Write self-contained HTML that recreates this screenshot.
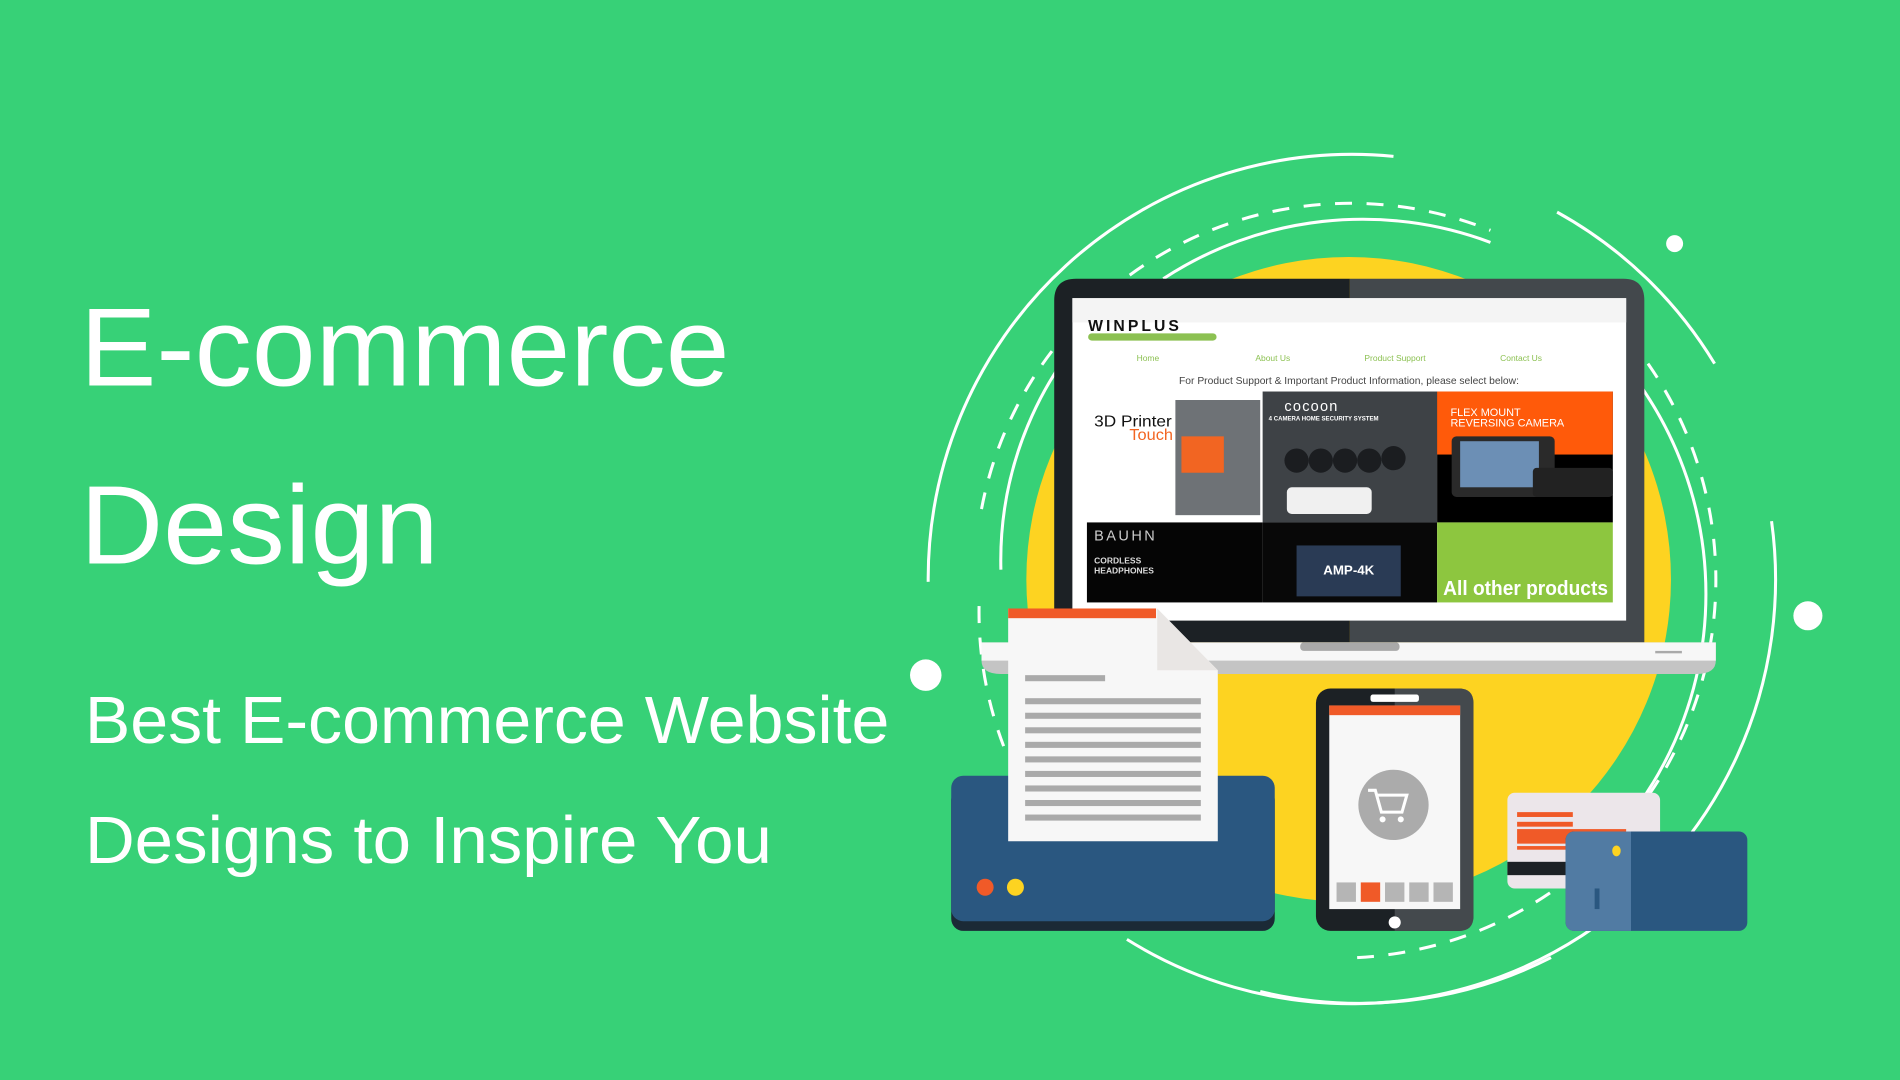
<!DOCTYPE html>
<html><head><meta charset="utf-8"><style>
html,body{margin:0;padding:0;background:#37d177;overflow:hidden}
svg{display:block}
</style></head><body>
<svg width="1900" height="1080" viewBox="0 0 1568 891" preserveAspectRatio="none" xmlns="http://www.w3.org/2000/svg" font-family="Liberation Sans, sans-serif">
<rect width="1568" height="891" fill="#37d177"/>
<g fill="#fff">
<text x="66" y="318" font-size="92" textLength="536" lengthAdjust="spacingAndGlyphs">E-commerce</text>
<text x="66" y="465" font-size="92" textLength="296" lengthAdjust="spacingAndGlyphs">Design</text>
<text x="70" y="613" font-size="55" textLength="664" lengthAdjust="spacingAndGlyphs">Best E-commerce Website</text>
<text x="70" y="712" font-size="55" textLength="567" lengthAdjust="spacingAndGlyphs">Designs to Inspire You</text>
</g>
<circle cx="1113" cy="478" r="266" fill="#fdd321"/>
<g fill="none" stroke="#fff" stroke-width="2.5">
<path d="M 766 480 A 350 350 0 0 1 1150 129"/>
<path d="M 1285 175 A 350 350 0 0 1 1415 300"/>
<path d="M 1462 430 A 350 350 0 0 1 930 775"/>
<path d="M 1040 818 A 350 350 0 0 0 1280 790"/>
<path d="M 960 230 A 300 300 0 0 1 1230 200"/>
<path d="M 1340 300 A 300 300 0 0 1 1340 680"/>
<path d="M 826 470 A 290 290 0 0 1 930 240"/>
<path stroke-dasharray="14 12" d="M 810 420 A 310 310 0 0 1 1230 190"/>
<path stroke-dasharray="14 12" d="M 1360 300 A 312 312 0 0 1 1120 790"/>
<path stroke-dasharray="14 12" d="M 808 500 A 310 310 0 0 0 830 620"/>
</g>
<circle cx="764" cy="557" r="13" fill="#fff"/>
<circle cx="1492" cy="508" r="12" fill="#fff"/>
<circle cx="1382" cy="201" r="7" fill="#fff"/>
<path d="M870 530 V248 Q870 230 888 230 H1114 V530 Z" fill="#1c2125"/>
<path d="M1114 230 H1340 Q1357 230 1357 248 V530 H1114 Z" fill="#43484c"/>
<rect x="885" y="246" width="457" height="266" fill="#fff"/>
<rect x="885" y="246" width="457" height="20" fill="#f4f4f4"/>
<text x="898" y="273" font-size="13" font-weight="bold" letter-spacing="2.5" fill="#111">WINPLUS</text>
<rect x="898" y="275" width="106" height="6" rx="3" fill="#8cc152"/>
<g font-size="7" fill="#8cc152"><text x="938" y="298">Home</text><text x="1036" y="298">About Us</text><text x="1126" y="298">Product Support</text><text x="1238" y="298">Contact Us</text></g>
<text x="973" y="317" font-size="8.5" fill="#444">For Product Support &amp; Important Product Information, please select below:</text>
<rect x="897" y="323" width="145" height="108" fill="#fff"/>
<rect x="970" y="330" width="70" height="95" fill="#6e7276"/>
<rect x="975" y="360" width="35" height="30" fill="#f26522"/>
<text x="903" y="352" font-size="13" fill="#111" textLength="64" lengthAdjust="spacingAndGlyphs">3D Printer</text>
<text x="932" y="363" font-size="13" fill="#f26522" textLength="36" lengthAdjust="spacingAndGlyphs">Touch</text>
<rect x="1042" y="323" width="144" height="108" fill="#3e4246"/>
<text x="1060" y="339" font-size="12" fill="#fff" letter-spacing="1">cocoon</text>
<text x="1047" y="347" font-size="5" fill="#fff" font-weight="bold">4 CAMERA HOME SECURITY SYSTEM</text>
<g fill="#1b1d20"><circle cx="1070" cy="380" r="10"/><circle cx="1090" cy="380" r="10"/><circle cx="1110" cy="380" r="10"/><circle cx="1130" cy="380" r="10"/><circle cx="1150" cy="378" r="10"/></g>
<rect x="1062" y="402" width="70" height="22" rx="4" fill="#f0f0f0"/>
<rect x="1186" y="323" width="145" height="108" fill="#000"/>
<rect x="1186" y="323" width="145" height="52" fill="#ff5a0a"/>
<text x="1197" y="343" font-size="9" fill="#fff">FLEX MOUNT</text>
<text x="1197" y="352" font-size="9" fill="#fff">REVERSING CAMERA</text>
<rect x="1198" y="360" width="85" height="50" rx="4" fill="#2a2a2a"/>
<rect x="1205" y="364" width="65" height="38" fill="#6c8fb5"/>
<rect x="1265" y="386" width="66" height="24" rx="3" fill="#222"/>
<rect x="897" y="431" width="145" height="66" fill="#050505"/>
<text x="903" y="446" font-size="12" fill="#ccc" letter-spacing="2">BAUHN</text>
<text x="903" y="465" font-size="7" font-weight="bold" fill="#ddd">CORDLESS</text>
<text x="903" y="473" font-size="7" font-weight="bold" fill="#ddd">HEADPHONES</text>
<rect x="1042" y="431" width="144" height="66" fill="#080808"/>
<rect x="1070" y="450" width="86" height="42" fill="#2a3b55"/>
<text x="1092" y="474" font-size="11" font-weight="bold" fill="#fff">AMP-4K</text>
<rect x="1186" y="431" width="145" height="66" fill="#8dc63f"/>
<text x="1191" y="491" font-size="17" font-weight="bold" fill="#fff" textLength="136" lengthAdjust="spacingAndGlyphs">All other products</text>
<path d="M810 530 H1416 V545 Q1416 556 1400 556 H826 Q810 556 810 545 Z" fill="#c4c4c4"/>
<rect x="810" y="530" width="606" height="15" fill="#f7f7f7"/>
<rect x="1073" y="530" width="82" height="7" rx="3" fill="#a9a9a9"/>
<rect x="1366" y="537" width="22" height="2" fill="#aaa"/>
<rect x="785" y="650" width="267" height="118" rx="10" fill="#1b2a36"/>
<rect x="785" y="640" width="267" height="120" rx="10" fill="#2a5780"/>
<circle cx="813" cy="732" r="7" fill="#f05a28"/>
<circle cx="838" cy="732" r="7" fill="#fdd321"/>
<path d="M832 502 H955 L1005 553 V694 H832 Z" fill="#f7f7f7"/>
<rect x="832" y="502" width="122" height="8" fill="#f05a28"/>
<path d="M955 502 L1005 553 H955 Z" fill="#e9e6e4"/>
<rect x="846" y="557" width="66" height="5" fill="#aaa"/>
<g fill="#aaa"><rect x="846" y="576" width="145" height="5"/><rect x="846" y="588" width="145" height="5"/><rect x="846" y="600" width="145" height="5"/><rect x="846" y="612" width="145" height="5"/><rect x="846" y="624" width="145" height="5"/><rect x="846" y="636" width="145" height="5"/><rect x="846" y="648" width="145" height="5"/><rect x="846" y="660" width="145" height="5"/><rect x="846" y="672" width="145" height="5"/></g>
<rect x="1086" y="568" width="130" height="200" rx="12" fill="#1c2125"/>
<path d="M1151 568 H1204 Q1216 568 1216 580 V756 Q1216 768 1204 768 H1151 Z" fill="#44494d"/>
<rect x="1131" y="573" width="40" height="6" rx="2" fill="#fff"/>
<rect x="1097" y="582" width="108" height="168" fill="#f7f7f7"/>
<rect x="1097" y="582" width="108" height="8" fill="#f05a28"/>
<circle cx="1150" cy="664" r="29" fill="#ababab"/>
<g fill="none" stroke="#fff" stroke-width="2.5"><path d="M1129 652 h6 l5 18 h17 l4 -14 h-24"/></g>
<circle cx="1141" cy="676" r="2.5" fill="#fff"/><circle cx="1156" cy="676" r="2.5" fill="#fff"/>
<g fill="#b5b5b5"><rect x="1103" y="728" width="16" height="16"/><rect x="1143" y="728" width="16" height="16"/><rect x="1163" y="728" width="16" height="16"/><rect x="1183" y="728" width="16" height="16"/></g>
<rect x="1123" y="728" width="16" height="16" fill="#f05a28"/>
<ellipse cx="1151" cy="761" rx="5" ry="5" fill="#fff"/>
<rect x="1244" y="654" width="126" height="79" rx="6" fill="#ece6ea"/>
<rect x="1252" y="670" width="46" height="4" fill="#f05a28"/>
<rect x="1252" y="678" width="46" height="4" fill="#f05a28"/>
<rect x="1252" y="684" width="90" height="12" fill="#f05a28"/>
<rect x="1252" y="698" width="70" height="3" fill="#f05a28"/>
<rect x="1244" y="711" width="80" height="11" fill="#1c2125"/>
<rect x="1292" y="686" width="150" height="82" rx="7" fill="#2a5780"/>
<path d="M1300 686 H1346 V768 H1300 Q1292 768 1292 760 V694 Q1292 686 1300 686 Z" fill="#517ba3"/>
<rect x="1316" y="733" width="4" height="17" fill="#2a5780"/>
<ellipse cx="1334" cy="702" rx="3.5" ry="4.5" fill="#fdd321"/>
</svg>
</body></html>
